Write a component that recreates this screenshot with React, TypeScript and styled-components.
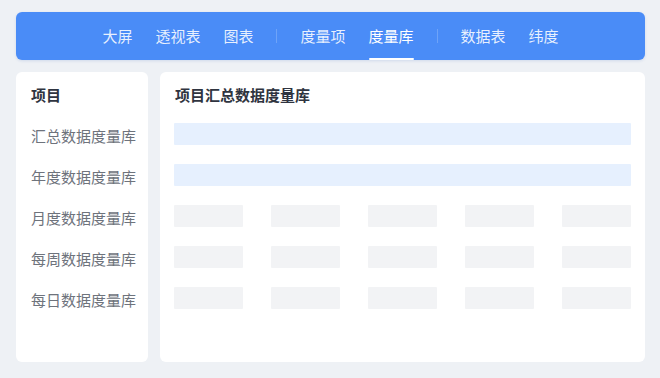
import React from 'react';
import styled, { createGlobalStyle } from 'styled-components';

const GlobalStyle = createGlobalStyle`
	html, body {
		margin: 0;
		padding: 0;
		background: #eef1f5;
	}

	body {
		font-family: "Noto Sans CJK SC", "Noto Sans", sans-serif;
	}
`;

const Page = styled.div`
	width: 660px;
	height: 378px;
	box-sizing: border-box;
	padding: 12px 15px 16px 16px;
	display: flex;
	flex-direction: column;
	gap: 12px;
`;

const Header = styled.nav`
	height: 48px;
	flex-shrink: 0;
	background: #4a8cf7;
	border-radius: 6px;
	display: flex;
	align-items: stretch;
	justify-content: center;
	gap: 23px;
	box-shadow: 0 1px 3px rgba(40, 90, 180, 0.15);
`;

const NavItem = styled.a<{ $active?: boolean }>`
	position: relative;
	display: flex;
	align-items: center;
	font-size: 15px;
	line-height: 20px;
	color: ${p => (p.$active ? '#ffffff' : 'rgba(255, 255, 255, 0.88)')};
	cursor: pointer;

	&::after {
		content: '';
		display: ${p => (p.$active ? 'block' : 'none')};
		position: absolute;
		left: 0;
		right: 0;
		bottom: 0;
		height: 2px;
		background: #ffffff;
		border-radius: 1px;
	}
`;

const NavDivider = styled.span`
	align-self: center;
	width: 1px;
	height: 14px;
	background: rgba(255, 255, 255, 0.2);
`;

const Body = styled.div`
	flex: 1;
	display: flex;
	gap: 12px;
	min-height: 0;
`;

const Panel = styled.section<{ $width?: number }>`
	box-sizing: border-box;
	background: #ffffff;
	border-radius: 6px;
	padding: 12px 14px;
	${p => (p.$width ? `width: ${p.$width}px; flex-shrink: 0;` : 'flex: 1;')}
`;

const PanelTitle = styled.h3`
	margin: 0 0 0 1px;
	font-size: 15px;
	line-height: 22px;
	font-weight: 600;
	color: #2f3440;
`;

const SideList = styled.ul`
	list-style: none;
	margin: 9px 0 0;
	padding: 0;
`;

const SideItem = styled.li`
	height: 41px;
	line-height: 41px;
	padding-left: 1px;
	font-size: 15px;
	color: #6e737c;
	white-space: nowrap;
`;

const Rows = styled.div`
	margin-top: 17px;
	display: flex;
	flex-direction: column;
	gap: 19px;
`;

const Bar = styled.div`
	height: 22px;
	background: #e6f0fe;
	border-radius: 1px;
`;

const CellRow = styled.div`
	display: grid;
	grid-template-columns: repeat(5, 69px);
	justify-content: space-between;
`;

const Cell = styled.div`
	height: 22px;
	background: #f2f3f5;
	border-radius: 1px;
`;

const navGroups = [
	['大屏', '透视表', '图表'],
	['度量项', '度量库'],
	['数据表', '纬度'],
];

const sideItems = ['汇总数据度量库', '年度数据度量库', '月度数据度量库', '每周数据度量库', '每日数据度量库'];

const App: React.FC = () => {
	const active = '度量库';

	return (
		<>
			<GlobalStyle />
			<Page>
				<Header>
					{navGroups.map((group, gi) => (
						<React.Fragment key={gi}>
							{gi > 0 && <NavDivider />}
							{group.map(label => (
								<NavItem key={label} $active={label === active}>
									{label}
								</NavItem>
							))}
						</React.Fragment>
					))}
				</Header>

				<Body>
					<Panel $width={132}>
						<PanelTitle>项目</PanelTitle>
						<SideList>
							{sideItems.map(item => (
								<SideItem key={item}>{item}</SideItem>
							))}
						</SideList>
					</Panel>

					<Panel>
						<PanelTitle>项目汇总数据度量库</PanelTitle>
						<Rows>
							<Bar />
							<Bar />
							{[0, 1, 2].map(r => (
								<CellRow key={r}>
									{[0, 1, 2, 3, 4].map(c => (
										<Cell key={c} />
									))}
								</CellRow>
							))}
						</Rows>
					</Panel>
				</Body>
			</Page>
		</>
	);
};

export default App;
